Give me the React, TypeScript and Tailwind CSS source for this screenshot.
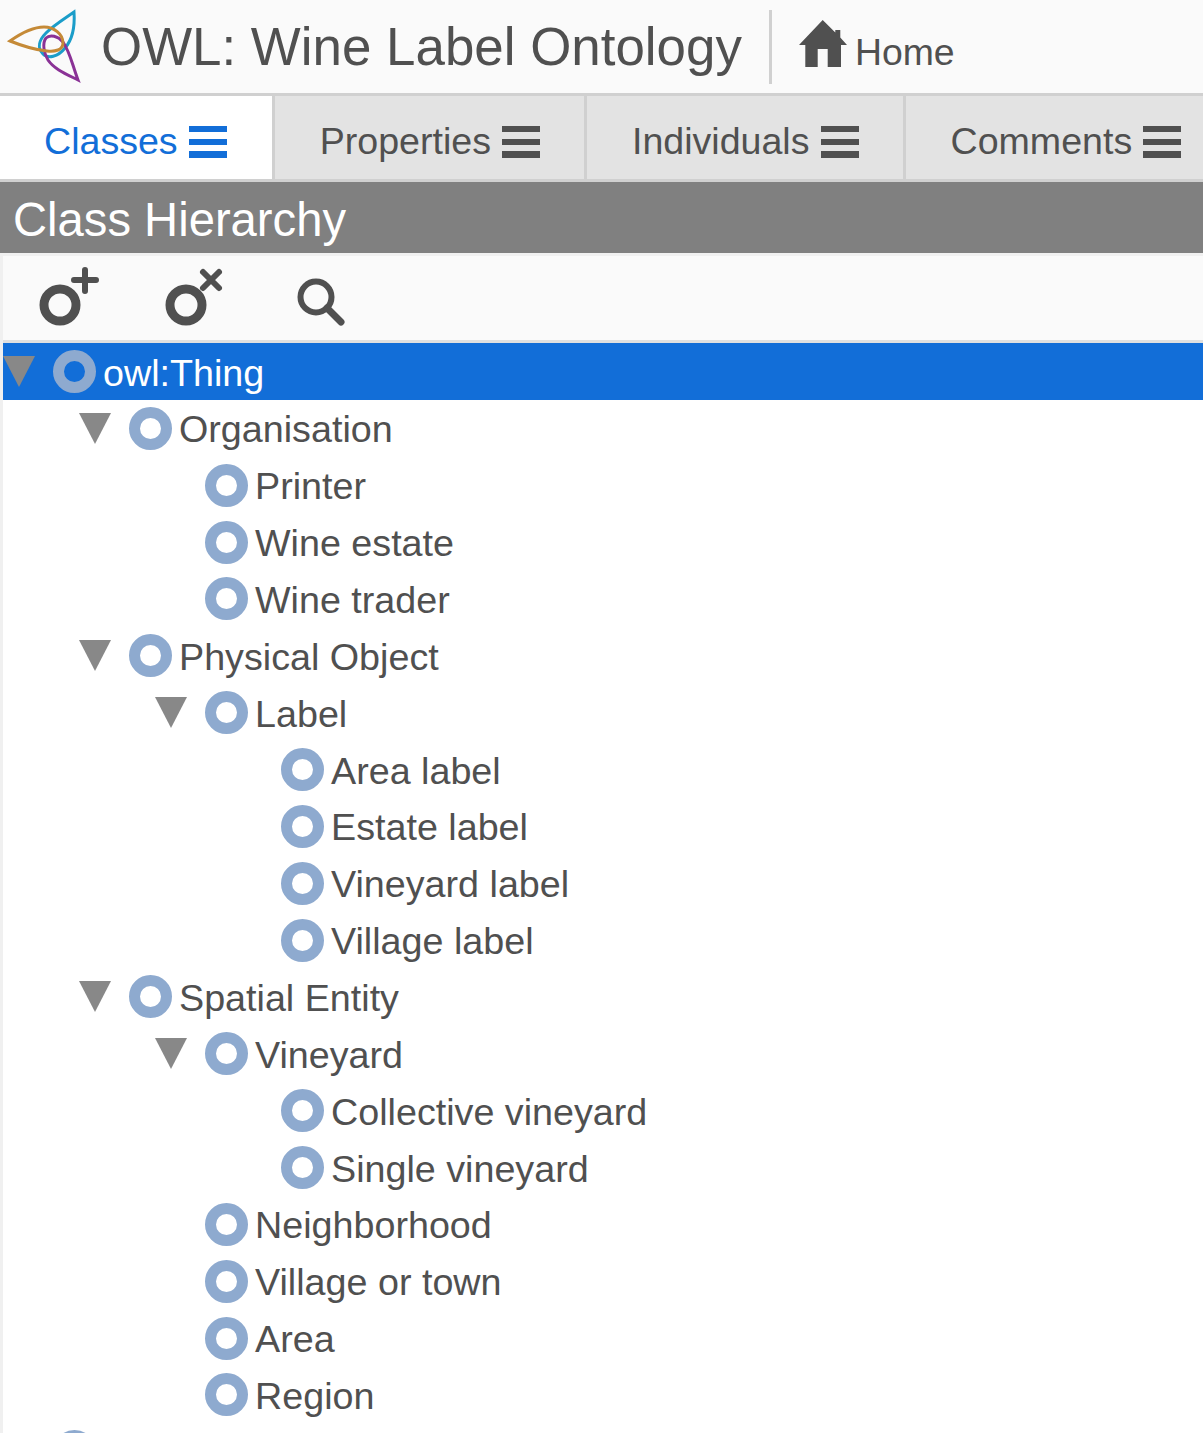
const rows: { label: string; level: number; open?: boolean; selected?: boolean }[] = [
  { label: "owl:Thing", level: 0, open: true, selected: true },
  { label: "Organisation", level: 1, open: true },
  { label: "Printer", level: 2 },
  { label: "Wine estate", level: 2 },
  { label: "Wine trader", level: 2 },
  { label: "Physical Object", level: 1, open: true },
  { label: "Label", level: 2, open: true },
  { label: "Area label", level: 3 },
  { label: "Estate label", level: 3 },
  { label: "Vineyard label", level: 3 },
  { label: "Village label", level: 3 },
  { label: "Spatial Entity", level: 1, open: true },
  { label: "Vineyard", level: 2, open: true },
  { label: "Collective vineyard", level: 3 },
  { label: "Single vineyard", level: 3 },
  { label: "Neighborhood", level: 2 },
  { label: "Village or town", level: 2 },
  { label: "Area", level: 2 },
  { label: "Region", level: 2 },
  { label: "", level: 0 },
];

const tabs = ["Classes", "Properties", "Individuals", "Comments"];

function Logo() {
  return (
    <svg width="82" height="84" viewBox="0 0 82 84" fill="none" strokeWidth="3" className="mb-[5px] shrink-0">
      <path d="M74 10C75 25 72 38 65 46C58 55 48 57 43 52C37 46 39 38 46 31C54 23 64 17 74 10Z" stroke="#1b9dc9" />
      <path d="M78 78C72 62 70 50 63 40C58 34 50 32 46 36C42 41 44 52 48 58C54 67 66 72 78 78Z" stroke="#8a3296" />
      <path d="M10 39C20 32 32 25 44 25C54 25 63 32 63 41C63 48 55 50 47 49C35 48 20 43 10 39Z" stroke="#c58a37" />
    </svg>
  );
}

function Burger({ active }: { active: boolean }) {
  const color = active ? "bg-[#126ed8]" : "bg-[#505050]";
  return (
    <div className="w-[38px] h-[32px] flex flex-col justify-between shrink-0">
      <div className={`h-[6px] ${color}`} />
      <div className={`h-[6px] ${color}`} />
      <div className={`h-[7px] ${color}`} />
    </div>
  );
}

function ClassRing({ children }: { children: React.ReactNode }) {
  return (
    <svg width="62" height="62" viewBox="0 0 62 62" fill="none" stroke="#505050" className="shrink-0">
      <circle cx="22" cy="38" r="16" strokeWidth="9" />
      {children}
    </svg>
  );
}

export default function App() {
  return (
    <div className="w-[1203px] h-[1433px] overflow-hidden bg-white text-[#505050] font-['Liberation_Sans',Arial,sans-serif]">
      <header className="h-[96px] flex items-center bg-[#fafafa] border-b-[3px] border-[#d0d0d0]">
        <Logo />
        <h1 className="ml-[19px] mt-[2px] text-[52.9px] leading-none whitespace-nowrap">OWL: Wine Label Ontology</h1>
        <div className="ml-[27px] w-[3px] h-[74px] bg-[#d0d0d0]" />
        <svg width="48" height="47" viewBox="0 0 48 47" fill="#505050" className="ml-[27px] mb-[6px] shrink-0">
          <path d="M23.7 0L36.3 12.4V10H41.3V17.4L48 25H42V47H28.7V29H18.7V47H6.3V25H0Z" />
        </svg>
        <span className="ml-[8px] mt-[13px] text-[37.4px] leading-none">Home</span>
      </header>

      <nav className="h-[86px] flex overflow-hidden border-b-[3px] border-[#d0d0d0]">
        {tabs.map((t, i) => (
          <div
            key={t}
            className={`shrink-0 flex items-center gap-[11px] pt-[9px] border-r-[3px] border-[#d0d0d0] ${i === 0 ? "pl-[44px] pr-[45px] bg-white text-[#126ed8]" : "pl-[45px] pr-[44px] bg-[#e3e3e3]"}`}
          >
            <span className="text-[37.6px] leading-none whitespace-nowrap">{t}</span>
            <Burger active={i === 0} />
          </div>
        ))}
      </nav>

      <div className="h-[71px] flex items-center pl-[13px] pt-[4px] bg-[#808080] text-white text-[47.2px] leading-none">
        Class Hierarchy
      </div>

      <div className="border-l-[3px] border-t-[3px] border-[#f0f0f0]">
        <div className="h-[87px] flex items-center gap-[64px] pl-[35px] bg-[#fafafa] border-b-[3px] border-[#e0e0e0]">
          <ClassRing>
            <path d="M47 3V24M36 13H58" strokeWidth="6" strokeLinecap="round" />
          </ClassRing>
          <ClassRing>
            <path d="M39 5L55 21M55 5L39 21" strokeWidth="6" strokeLinecap="round" />
          </ClassRing>
          <svg width="50" height="50" viewBox="0 0 50 50" fill="none" stroke="#505050" className="ml-[5px] mt-[9px] shrink-0">
            <circle cx="21" cy="19" r="15.5" strokeWidth="6" />
            <path d="M32 30L46 44" strokeWidth="7" strokeLinecap="round" />
          </svg>
        </div>

        <ul>
          {rows.map((r, i) => (
            <li
              key={i}
              className={`h-[56.87px] flex items-center text-[37.7px] leading-none whitespace-nowrap ${r.selected ? "bg-[#126ed8] text-white" : ""}`}
              style={{ paddingLeft: r.level * 76 }}
            >
              <div className="w-[50px] shrink-0">
                <svg width="32" height="31" viewBox="0 0 32 31" fill="#888888" className={r.open ? "block" : "hidden"}>
                  <path d="M0 0H32L16 31Z" />
                </svg>
              </div>
              <div className="w-[43px] h-[43px] shrink-0 rounded-full border-[11px] border-[#8eaacf]" />
              <span className="ml-[7px] mt-[4px]">{r.label}</span>
            </li>
          ))}
        </ul>
      </div>
    </div>
  );
}
